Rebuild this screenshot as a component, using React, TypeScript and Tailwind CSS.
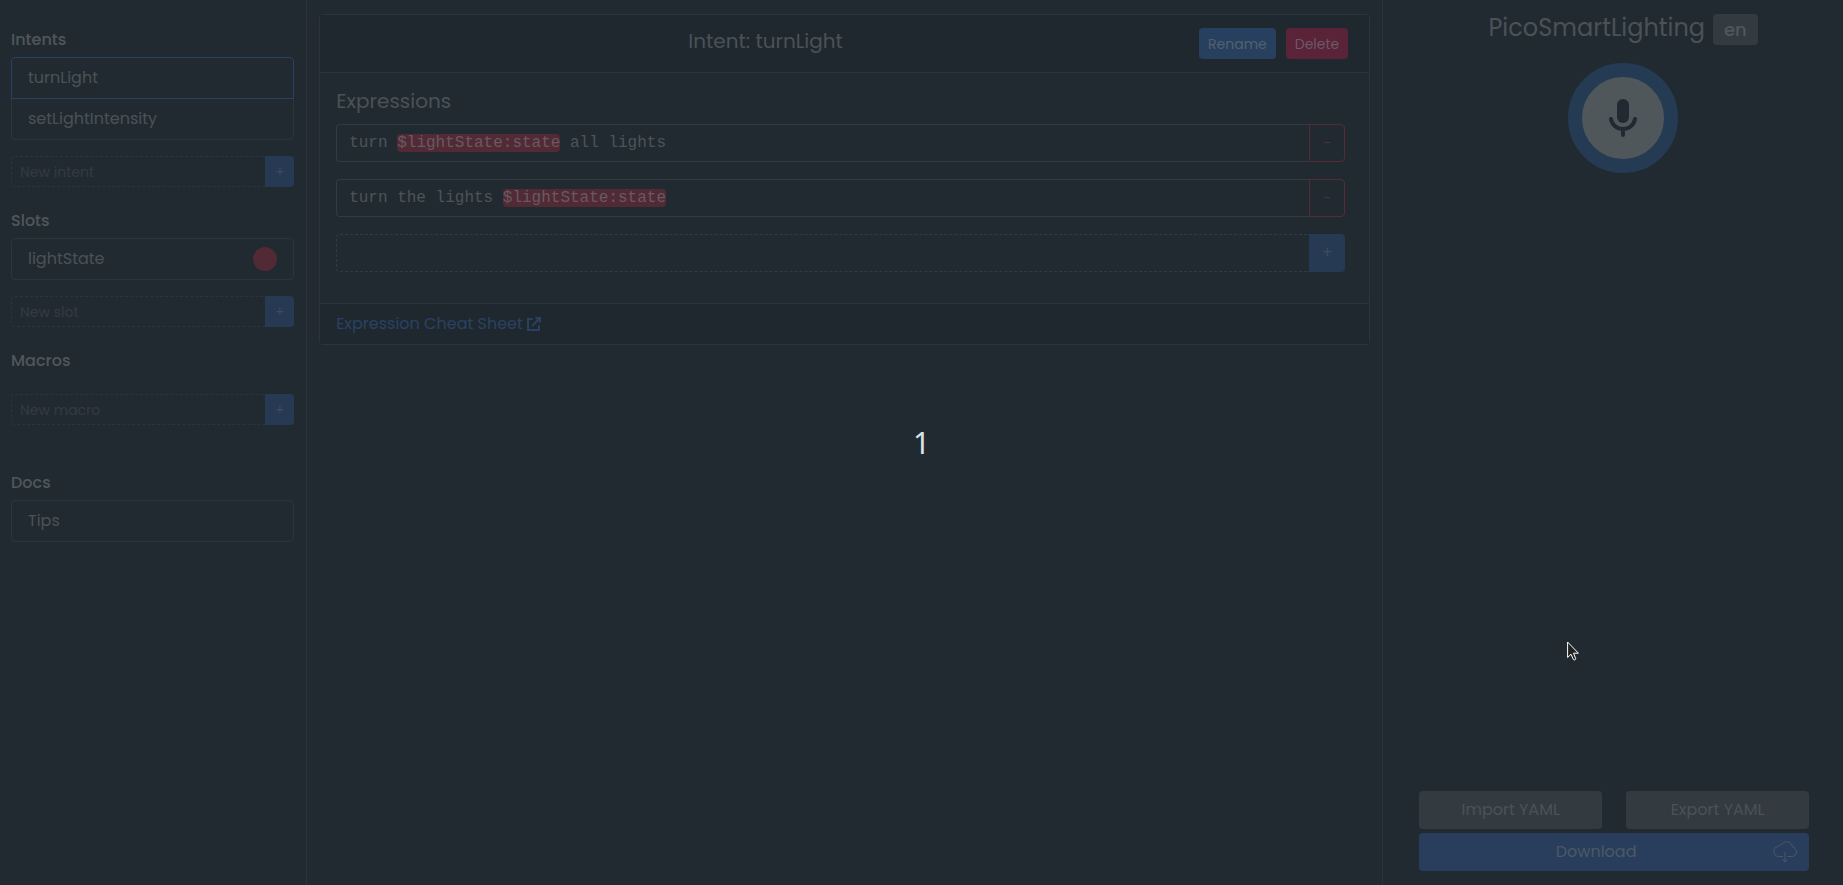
import { useState } from "react"

type AddFieldProps = {
  id: string
  label: string
}

type SidebarItemProps = {
  name: string
  active?: boolean
  color?: string
}

type Token = {
  text: string
  slot?: boolean
}

const intents = ["turnLight", "setLightIntensity"]

const expressions: Token[][] = [
  [
    { text: "turn " },
    { text: "$lightState:state", slot: true },
    { text: " all lights" },
  ],
  [{ text: "turn the lights " }, { text: "$lightState:state", slot: true }],
]

function SectionTitle({ children }: { children: React.ReactNode }) {
  return (
    <h2 className="pb-[5px] text-base font-medium text-[#50575b]">
      {children}
    </h2>
  )
}

function SidebarItem({ name, active, color }: SidebarItemProps) {
  return (
    <li
      className={
        active
          ? "relative z-10 -mt-px border border-[#294263] first:mt-0 first:rounded-t last:rounded-b"
          : "-mt-px border border-[#2d353b] first:mt-0 first:rounded-t last:rounded-b"
      }
    >
      <button
        type="button"
        className="flex h-10 w-full items-center justify-between px-4 text-left text-base text-[#4b5257]"
      >
        {name}
        {color && <span className={`size-6 rounded-full ${color}`} />}
      </button>
    </li>
  )
}

function AddField({ id, label }: AddFieldProps) {
  const [value, setValue] = useState("")

  return (
    <form
      className="mt-4 flex h-[31px]"
      onSubmit={(event) => event.preventDefault()}
    >
      <input
        id={id}
        aria-label={label}
        placeholder={label}
        value={value}
        onChange={(event) => setValue(event.target.value)}
        className="min-w-0 flex-1 rounded-l border border-r-0 border-dashed border-[#2d353b] bg-transparent px-2 text-sm text-[#4b5257] outline-none placeholder:text-[#333b41]"
      />
      <button
        type="submit"
        aria-label={`Add: ${label}`}
        className="w-[29px] rounded-r bg-[#263a53] text-sm text-[#3f4b56]"
      >
        +
      </button>
    </form>
  )
}

function Sidebar() {
  return (
    <aside className="col-span-2 border-r border-[#2b3339] pt-7 pr-3 pl-[11px]">
      <SectionTitle>Intents</SectionTitle>
      <ul>
        {intents.map((intent, index) => (
          <SidebarItem key={intent} name={intent} active={index === 0} />
        ))}
      </ul>
      <AddField id="new-intent" label="New intent" />

      <div className="mt-[22px]">
        <SectionTitle>Slots</SectionTitle>
        <ul>
          <SidebarItem name="lightState" color="bg-[#522a36]" />
        </ul>
        <AddField id="new-slot" label="New slot" />
      </div>

      <div className="mt-[22px]">
        <SectionTitle>Macros</SectionTitle>
        <AddField id="new-macro" label="New macro" />
      </div>

      <div className="mt-[46px]">
        <SectionTitle>Docs</SectionTitle>
        <ul>
          <SidebarItem name="Tips" />
        </ul>
      </div>
    </aside>
  )
}

function ExpressionRow({ tokens }: { tokens: Token[] }) {
  return (
    <div className="mb-[17px] flex h-[38px]">
      <div
        role="textbox"
        aria-label="Expression"
        contentEditable
        suppressContentEditableWarning
        className="min-w-0 flex-1 rounded-l border border-r-0 border-[#333b41] px-3 pt-1.5 font-['Liberation_Mono',monospace] text-base leading-6 whitespace-pre text-[#4d5458] outline-none"
      >
        {tokens.map((token, index) => (
          <span
            key={index}
            className={token.slot ? "rounded bg-[#522a36] text-[#685a60]" : ""}
          >
            {token.text}
          </span>
        ))}
      </div>
      <button
        type="button"
        aria-label="Remove expression"
        className="w-9 rounded-r border border-[#572a37] text-sm text-[#572c39]"
      >
        -
      </button>
    </div>
  )
}

function IntentEditor() {
  return (
    <main className="col-span-7 pt-3.5 pr-3 pl-3">
      <section className="rounded border border-[#2c343a]">
        <header className="flex h-[58px] items-center border-b border-[#2c343a] bg-[#20282f] pr-[21px] pl-4">
          <h1 className="flex-1 pr-1 pb-1.5 text-center text-xl text-[#4b5257]">
            Intent: turnLight
          </h1>
          <div className="flex gap-2.5">
            <button
              type="button"
              className="h-[31px] rounded bg-[#28405f] px-[9px] text-sm text-[#52606d]"
            >
              Rename
            </button>
            <button
              type="button"
              className="h-[31px] rounded bg-[#5a2337] px-[9px] text-sm text-[#6b596a]"
            >
              Delete
            </button>
          </div>
        </header>

        <div className="pt-3.5 pr-6 pb-[31px] pl-4">
          <h2 className="mb-[9px] text-xl text-[#4b5257]">Expressions</h2>

          {expressions.map((tokens, index) => (
            <ExpressionRow key={index} tokens={tokens} />
          ))}

          <div className="flex h-[38px]">
            <input
              aria-label="New expression"
              className="min-w-0 flex-1 rounded-l border border-r-0 border-dashed border-[#333b41] bg-transparent px-3 font-['Liberation_Mono',monospace] text-base text-[#4d5458] outline-none"
            />
            <button
              type="button"
              aria-label="Add expression"
              className="w-9 rounded-r bg-[#263a53] text-base text-[#3f4b56]"
            >
              +
            </button>
          </div>
        </div>

        <footer className="flex h-[41px] items-center border-t border-[#2c343a] bg-[#20282f] px-4">
          <a
            href="#cheat-sheet"
            className="flex items-center gap-1 text-base text-[#294263]"
          >
            Expression Cheat Sheet
            <svg
              viewBox="0 0 14 14"
              className="size-3.5"
              fill="none"
              stroke="currentColor"
              strokeWidth="2"
              aria-hidden="true"
            >
              <path d="M5.500 2H1v11h11V8.500M8.500 1H13v4.500M13 1L5 9" />
            </svg>
          </a>
        </footer>
      </section>
    </main>
  )
}

function MicIcon() {
  return (
    <svg
      viewBox="0 0 28 38"
      className="h-[38px] w-7"
      fill="none"
      stroke="#222a31"
      strokeLinecap="round"
      aria-hidden="true"
    >
      <rect x="8" y="0" width="12" height="24" rx="6" fill="#222a31" stroke="none" />
      <path d="M2 20C3 26 8 30 14 30s11-4 12-10M14 30v6" strokeWidth="4" />
    </svg>
  )
}

function CloudIcon() {
  return (
    <svg
      viewBox="0 0 24 22"
      className="h-[22px] w-6"
      fill="none"
      stroke="currentColor"
      aria-hidden="true"
    >
      <path d="M10 15.500H5.500a5 5 0 0 1-.5-9.900C5.500 4.500 7 4 8 4.300 9.300 1.800 11.300.8 13.500.8c3.300 0 5.700 2.300 6 5.200 2.400.5 4 2.400 4 4.800 0 2.700-2 4.700-4.700 4.700H14.500" />
      <path d="M12 11v10M9.500 18.500L12 21l2.500-2.500" />
    </svg>
  )
}

function ProjectPanel() {
  return (
    <aside className="col-span-3 flex flex-col border-l border-[#2b3339] pb-3.5 pl-5">
      <div className="flex items-start justify-center gap-2 pt-3.5">
        <h1 className="text-2xl leading-7 text-[#4b5257]">
          PicoSmartLighting
        </h1>
        <span className="rounded bg-[#333b41] px-[11px] text-lg leading-[31px] font-medium text-[#50575b]">
          en
        </span>
      </div>

      <button
        type="button"
        aria-label="Start listening"
        className="mx-auto mt-[18px] flex size-[110px] items-center justify-center rounded-full border-[14px] border-[#253a53] bg-[#50575b]"
      >
        <MicIcon />
      </button>

      <div className="mt-auto grid grid-cols-2 gap-x-6 gap-y-1 pr-[34px] pl-4">
        <button
          type="button"
          className="h-[38px] rounded bg-[#333b41] text-base text-[#4b5257]"
        >
          Import YAML
        </button>
        <button
          type="button"
          className="h-[38px] rounded bg-[#333b41] text-base text-[#4b5257]"
        >
          Export YAML
        </button>
        <button
          type="button"
          className="col-span-2 flex h-[38px] items-center gap-3 rounded bg-[#283e5c] px-3 text-base text-[#4b5966]"
        >
          <span className="flex-1">Download</span>
          <CloudIcon />
        </button>
      </div>
    </aside>
  )
}

export default function App() {
  return (
    <div className="relative grid min-h-screen grid-cols-12 bg-[#222a31] font-[Poppins,Inter,sans-serif]">
      <Sidebar />
      <IntentEditor />
      <ProjectPanel />

      <div className="pointer-events-none absolute inset-0 z-20 flex items-center justify-center font-['Noto_Sans',sans-serif] text-3xl text-[#dce3e8]">
        1
      </div>

      <svg
        viewBox="0 0 12 20"
        className="pointer-events-none absolute top-[72.4%] left-[85%] z-30 h-5 w-3"
        fill="#222222"
        stroke="#ffffff"
        aria-hidden="true"
      >
        <path d="M.6 1v15.500l3.400-3.300 2.400 5.300c.8 1 2.600.2 2.300-1L6.500 12.200h4.900z" />
      </svg>
    </div>
  )
}
